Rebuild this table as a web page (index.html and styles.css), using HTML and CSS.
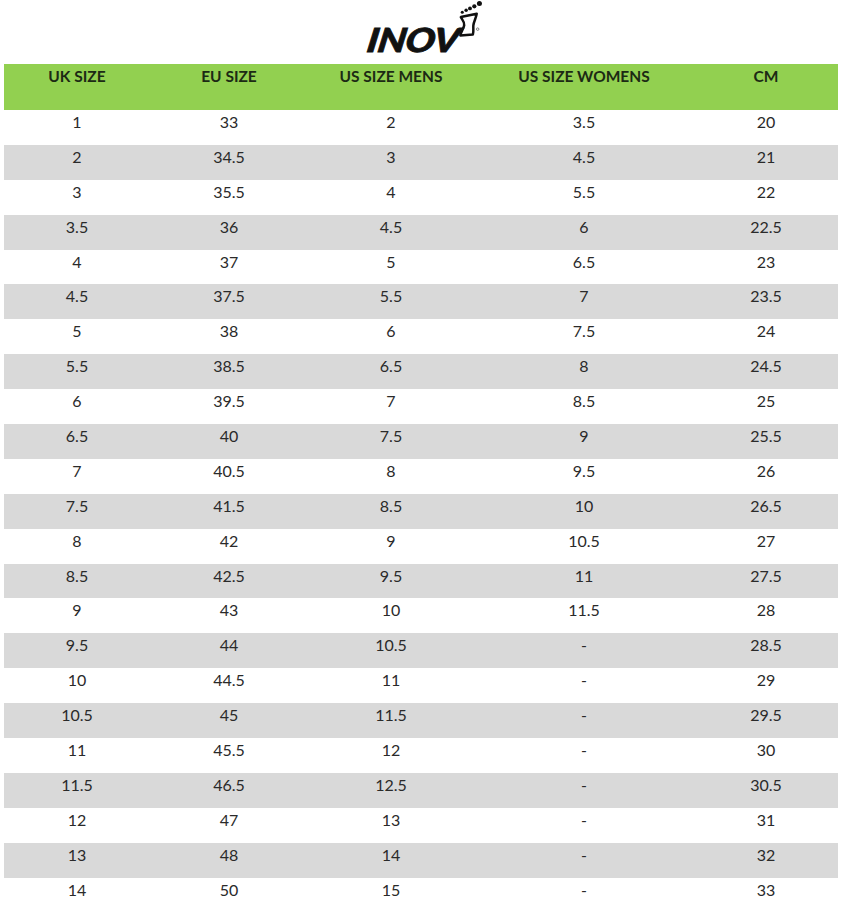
FILE: index.html
```html
<!DOCTYPE html>
<html>
<head>
<meta charset="utf-8">
<link rel="stylesheet" href="styles.css">
</head>
<body>
<div class="logo">
  <span class="brand">INOV</span>
  <svg class="foot" viewBox="0 0 28 40" width="27" height="39">
    <circle cx="6.5" cy="12.5" r="1.6"/>
    <circle cx="10.5" cy="10.5" r="1.8"/>
    <circle cx="14.5" cy="8.5" r="2"/>
    <circle cx="19" cy="6.3" r="2.2"/>
    <circle cx="24.3" cy="3.4" r="2.6"/>
    <path d="M5 17.5 L21.5 14 C21 18 18.5 22 18 26 C17.7 29 18.5 32 17.5 35.5 L4.5 36.5 C5 33 8 29 8.5 26 C9 22 6 20 5 17.5 Z" fill="none" stroke="#111" stroke-width="2.6" stroke-linejoin="round"/>
    <circle cx="22.5" cy="30" r="1.3" fill="none" stroke="#333" stroke-width="0.6"/>
  </svg>
</div>
<div class="table">
  <div class="row head">
    <div>UK SIZE</div><div>EU SIZE</div><div>US SIZE MENS</div><div>US SIZE WOMENS</div><div>CM</div>
  </div>
  <div class="row"><div>1</div><div>33</div><div>2</div><div>3.5</div><div>20</div></div>
  <div class="row alt"><div>2</div><div>34.5</div><div>3</div><div>4.5</div><div>21</div></div>
  <div class="row"><div>3</div><div>35.5</div><div>4</div><div>5.5</div><div>22</div></div>
  <div class="row alt"><div>3.5</div><div>36</div><div>4.5</div><div>6</div><div>22.5</div></div>
  <div class="row"><div>4</div><div>37</div><div>5</div><div>6.5</div><div>23</div></div>
  <div class="row alt"><div>4.5</div><div>37.5</div><div>5.5</div><div>7</div><div>23.5</div></div>
  <div class="row"><div>5</div><div>38</div><div>6</div><div>7.5</div><div>24</div></div>
  <div class="row alt"><div>5.5</div><div>38.5</div><div>6.5</div><div>8</div><div>24.5</div></div>
  <div class="row"><div>6</div><div>39.5</div><div>7</div><div>8.5</div><div>25</div></div>
  <div class="row alt"><div>6.5</div><div>40</div><div>7.5</div><div>9</div><div>25.5</div></div>
  <div class="row"><div>7</div><div>40.5</div><div>8</div><div>9.5</div><div>26</div></div>
  <div class="row alt"><div>7.5</div><div>41.5</div><div>8.5</div><div>10</div><div>26.5</div></div>
  <div class="row"><div>8</div><div>42</div><div>9</div><div>10.5</div><div>27</div></div>
  <div class="row alt"><div>8.5</div><div>42.5</div><div>9.5</div><div>11</div><div>27.5</div></div>
  <div class="row"><div>9</div><div>43</div><div>10</div><div>11.5</div><div>28</div></div>
  <div class="row alt"><div>9.5</div><div>44</div><div>10.5</div><div>-</div><div>28.5</div></div>
  <div class="row"><div>10</div><div>44.5</div><div>11</div><div>-</div><div>29</div></div>
  <div class="row alt"><div>10.5</div><div>45</div><div>11.5</div><div>-</div><div>29.5</div></div>
  <div class="row"><div>11</div><div>45.5</div><div>12</div><div>-</div><div>30</div></div>
  <div class="row alt"><div>11.5</div><div>46.5</div><div>12.5</div><div>-</div><div>30.5</div></div>
  <div class="row"><div>12</div><div>47</div><div>13</div><div>-</div><div>31</div></div>
  <div class="row alt"><div>13</div><div>48</div><div>14</div><div>-</div><div>32</div></div>
  <div class="row"><div>14</div><div>50</div><div>15</div><div>-</div><div>33</div></div>
</div>
</body>
</html>
```
FILE: styles.css
```css
html, body {
  margin: 0;
  padding: 0;
  background: #ffffff;
  overflow: hidden;
}
body {
  font-family: Lato, "Open Sans", sans-serif;
  color: #222;
}
.logo {
  height: 64px;
  display: flex;
  justify-content: center;
  align-items: flex-start;
  padding-right: 2px;
  box-sizing: border-box;
}
.brand {
  font-family: Lato, sans-serif;
  font-weight: 900;
  font-style: italic;
  font-size: 39px;
  line-height: 1;
  letter-spacing: -0.5px;
  color: #111;
  -webkit-text-stroke: 0.9px #111;
  margin-top: 17px;
  transform: scaleY(0.85) skewX(-8deg);
  transform-origin: bottom left;
}
.foot {
  margin-left: 0;
  margin-top: 0;
  fill: #111;
}
.table {
  padding-left: 4px;
  width: 834px;
}
.row {
  display: grid;
  grid-template-columns: 146px 158px 166px 220px 144px;
  height: 34.9px;
  font-size: 16px;
  line-height: 20px;
  text-align: center;
  color: #2a2a2a;
}
.row > div {
  padding-top: 2px;
}
.row.alt {
  background: #d9d9d9;
}
.row.head {
  background: #92d050;
  height: 46px;
  font-weight: 700;
  font-size: 15.5px;
  color: #1c2a14;
}
```
